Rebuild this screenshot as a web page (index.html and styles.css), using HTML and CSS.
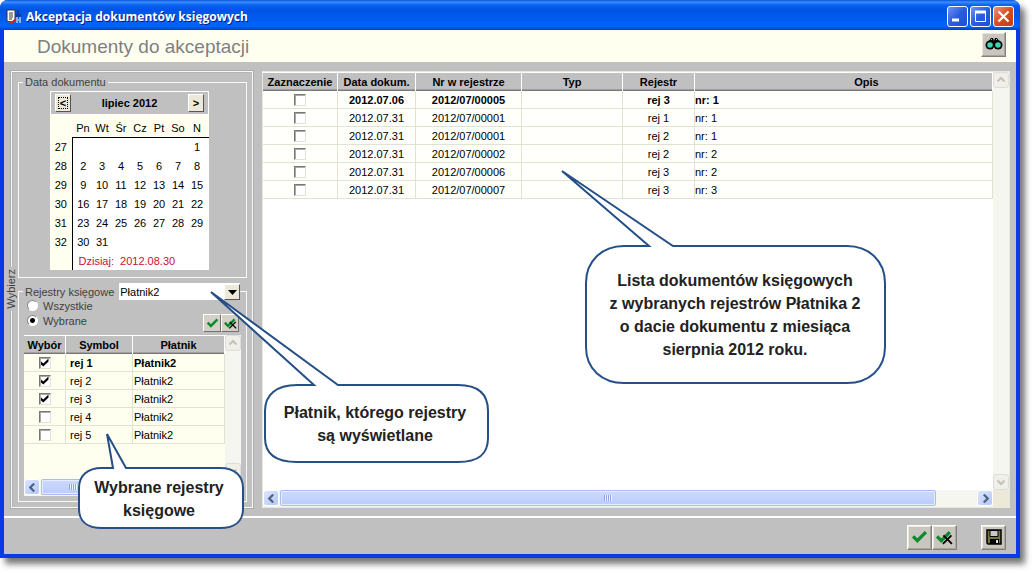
FILE: index.html
```html
<!DOCTYPE html>
<html lang="pl">
<head>
<meta charset="utf-8">
<title>Akceptacja dokumentów księgowych</title>
<link rel="stylesheet" href="styles.css">
</head>
<body>
<svg class="defs" width="0" height="0" aria-hidden="true">
  <symbol id="check" viewBox="0 0 16 16"><path d="M2 7l4 4 8-8" fill="none" stroke="#0b8a2b" stroke-width="3"/></symbol>
  <symbol id="uncheck" viewBox="0 0 16 16"><path d="M1 7l4 4 8-8" fill="none" stroke="#0b8a2b" stroke-width="3"/><path d="M7 6l8 8M14.500 6l-8 8" fill="none" stroke="#000" stroke-width="1.700"/></symbol>
  <symbol id="left" viewBox="0 0 8 8"><path d="M5.500 .5L2 4l3.500 3.500" fill="none" stroke="currentColor" stroke-width="2"/></symbol>
  <symbol id="right" viewBox="0 0 8 8"><path d="M2.500 .5L6 4 2.500 7.500" fill="none" stroke="currentColor" stroke-width="2"/></symbol>
  <symbol id="up" viewBox="0 0 8 8"><path d="M.5 5.500L4 2l3.500 3.500" fill="none" stroke="currentColor" stroke-width="2"/></symbol>
  <symbol id="down" viewBox="0 0 8 8"><path d="M.5 2.500L4 6l3.500-3.500" fill="none" stroke="currentColor" stroke-width="2"/></symbol>
</svg>
<div class="window">
  <div class="titlebar">
    <svg class="app-icon" width="16" height="16" viewBox="0 0 16 16"><path d="M1 1h8v11l-2 2-6-2z" fill="#fff" stroke="#333"/><path d="M3 4h4M3 6h4M3 8h4M3 10h3" stroke="#333"/><path d="M2 12l4 3 5-4-1-2-4 3z" fill="#d22"/><path d="M11 1h2v4h2v3h-5V5h1z" fill="#123a9c"/><path d="M11 8v6M14 8v6M12 11h1" stroke="#b9c6e8" stroke-width="1.500"/></svg>
    <h1 class="title">Akceptacja dokumentów księgowych</h1>
    <button class="win-btn" aria-label="Minimalizuj"><svg width="19" height="19"><path d="M4 13h7" stroke="#fff" stroke-width="3"/></svg></button>
    <button class="win-btn" aria-label="Maksymalizuj"><svg width="19" height="19"><path d="M4.500 5.500h10v9h-10z" fill="none" stroke="#fff"/><path d="M4 5h11" stroke="#fff" stroke-width="3"/></svg></button>
    <button class="win-btn win-close" aria-label="Zamknij"><svg width="19" height="19"><path d="M4.500 4.500l10 10M14.500 4.500l-10 10" stroke="#fff" stroke-width="2.200"/></svg></button>
  </div>
  <div class="header">
    <h2 class="heading">Dokumenty do akceptacji</h2>
    <button class="tool-btn" aria-label="Szukaj"><svg width="18" height="16" viewBox="0 0 18 16"><path d="M3 6l3-4h2l1 3 1-3h2l3 4v3H3z" fill="#000"/><circle cx="5" cy="9" r="4.500"/><circle cx="13" cy="9" r="4.500"/><circle cx="5" cy="9" r="2.800" fill="#3cd6b5"/><circle cx="13" cy="9" r="2.800" fill="#3cd6b5"/><path d="M6 4l1-1M11 3l1 1" stroke="#bbb"/></svg></button>
  </div>
  <div class="content">
    <section class="filter">
      <span class="filter-title">Wybierz</span>
      <fieldset class="group">
        <legend>Data dokumentu</legend>
        <div class="calendar">
          <div class="cal-head"><button class="cal-btn cal-focus">&lt;</button><span>lipiec 2012</span><button class="cal-btn">&gt;</button></div>
          <table class="cal-table">
            <thead><tr><td></td><th>Pn</th><th>Wt</th><th>Śr</th><th>Cz</th><th>Pt</th><th>So</th><th>N</th></tr></thead>
            <tbody>
              <tr><th>27</th><td></td><td></td><td></td><td></td><td></td><td></td><td>1</td></tr>
              <tr><th>28</th><td>2</td><td>3</td><td>4</td><td>5</td><td>6</td><td>7</td><td>8</td></tr>
              <tr><th>29</th><td>9</td><td>10</td><td>11</td><td>12</td><td>13</td><td>14</td><td>15</td></tr>
              <tr><th>30</th><td>16</td><td>17</td><td>18</td><td>19</td><td>20</td><td>21</td><td>22</td></tr>
              <tr><th>31</th><td>23</td><td>24</td><td>25</td><td>26</td><td>27</td><td>28</td><td>29</td></tr>
              <tr><th>32</th><td>30</td><td>31</td><td></td><td></td><td></td><td></td><td></td></tr>
              <tr><th></th><td class="today" colspan="7">Dzisiaj:&nbsp; 2012.08.30</td></tr>
            </tbody>
          </table>
        </div>
      </fieldset>
      <fieldset class="group group-reg">
        <legend class="reg-legend"><label for="payer">Rejestry księgowe</label>
          <span class="combo"><select id="payer"><option>Płatnik2</option></select><span class="combo-arrow"><svg width="9" height="5"><path d="M0 0h9L4.500 5z"/></svg></span></span>
        </legend>
        <div class="reg-options">
          <div class="radios">
            <label><input type="radio" name="scope">Wszystkie</label>
            <label><input type="radio" name="scope" checked>Wybrane</label>
          </div>
          <div class="mini-btns">
            <button class="mini-btn" aria-label="Zaznacz wszystkie"><svg width="13" height="13"><use href="#check"/></svg></button>
            <button class="mini-btn" aria-label="Odznacz wszystkie"><svg width="13" height="13"><use href="#uncheck"/></svg></button>
          </div>
        </div>
        <div class="grid-box reg-grid">
          <div class="grid-body">
            <table class="data">
              <colgroup><col class="w-pick"><col class="w-symbol"><col></colgroup>
              <thead><tr><th>Wybór</th><th>Symbol</th><th>Płatnik</th></tr></thead>
              <tbody>
                <tr class="current"><td class="center"><input type="checkbox" aria-label="rej 1" checked></td><td>rej 1</td><td>Płatnik2</td></tr>
                <tr><td class="center"><input type="checkbox" aria-label="rej 2" checked></td><td>rej 2</td><td>Płatnik2</td></tr>
                <tr><td class="center"><input type="checkbox" aria-label="rej 3" checked></td><td>rej 3</td><td>Płatnik2</td></tr>
                <tr><td class="center"><input type="checkbox" aria-label="rej 4"></td><td>rej 4</td><td>Płatnik2</td></tr>
                <tr><td class="center"><input type="checkbox" aria-label="rej 5"></td><td>rej 5</td><td>Płatnik2</td></tr>
              </tbody>
            </table>
          </div>
          <div class="vscroll"><span class="sb-btn off"><svg width="8" height="8"><use href="#up"/></svg></span><span class="sb-btn off"><svg width="8" height="8"><use href="#down"/></svg></span></div>
          <div class="hscroll"><span class="sb-btn"><svg width="9" height="9"><use href="#left"/></svg></span><span class="track"><span class="thumb short"><i class="grip"></i></span></span><span class="sb-btn"><svg width="9" height="9"><use href="#right"/></svg></span></div>
        </div>
      </fieldset>
    </section>
    <section class="grid-box docs">
      <div class="grid-body">
        <table class="data">
          <colgroup><col class="w-mark"><col class="w-date"><col class="w-no"><col class="w-type"><col class="w-reg"><col></colgroup>
          <thead><tr><th>Zaznaczenie</th><th>Data dokum.</th><th>Nr w rejestrze</th><th>Typ</th><th>Rejestr</th><th class="last">Opis</th></tr></thead>
          <tbody>
            <tr class="current"><td class="center"><input type="checkbox" aria-label="Dokument 1"></td><td class="center">2012.07.06</td><td class="center">2012/07/00005</td><td></td><td class="center">rej 3</td><td>nr: 1</td></tr>
            <tr><td class="center"><input type="checkbox" aria-label="Dokument 2"></td><td class="center">2012.07.31</td><td class="center">2012/07/00001</td><td></td><td class="center">rej 1</td><td>nr: 1</td></tr>
            <tr><td class="center"><input type="checkbox" aria-label="Dokument 3"></td><td class="center">2012.07.31</td><td class="center">2012/07/00001</td><td></td><td class="center">rej 2</td><td>nr: 1</td></tr>
            <tr><td class="center"><input type="checkbox" aria-label="Dokument 4"></td><td class="center">2012.07.31</td><td class="center">2012/07/00002</td><td></td><td class="center">rej 2</td><td>nr: 2</td></tr>
            <tr><td class="center"><input type="checkbox" aria-label="Dokument 5"></td><td class="center">2012.07.31</td><td class="center">2012/07/00006</td><td></td><td class="center">rej 3</td><td>nr: 2</td></tr>
            <tr><td class="center"><input type="checkbox" aria-label="Dokument 6"></td><td class="center">2012.07.31</td><td class="center">2012/07/00007</td><td></td><td class="center">rej 3</td><td>nr: 3</td></tr>
          </tbody>
        </table>
      </div>
      <div class="vscroll"><span class="sb-btn off"><svg width="8" height="8"><use href="#up"/></svg></span><span class="sb-btn off"><svg width="8" height="8"><use href="#down"/></svg></span></div>
      <div class="hscroll"><span class="sb-btn"><svg width="9" height="9"><use href="#left"/></svg></span><span class="track"><span class="thumb"><i class="grip"></i></span></span><span class="sb-btn"><svg width="9" height="9"><use href="#right"/></svg></span></div>
    </section>
  </div>
  <div class="footer">
    <div class="pair">
      <button class="tool-btn" aria-label="Akceptuj"><svg width="17" height="17"><use href="#check"/></svg></button>
      <button class="tool-btn" aria-label="Cofnij akceptację"><svg width="17" height="17"><use href="#uncheck"/></svg></button>
    </div>
    <button class="tool-btn" aria-label="Zapisz"><svg width="16" height="16" viewBox="0 0 16 16"><path d="M1 1h14v14H2l-1-1z" fill="#77753a" stroke="#000" stroke-width="1.500"/><path d="M4 1.500h8v6H4z" fill="#c8c8c8" stroke="#000"/><path d="M4 10h9v5H4z"/><path d="M10 11h2v3h-2z" fill="#ddd"/></svg></button>
  </div>

  <div class="callout callout-payer">
    <svg width="282" height="176"><path d="M3 2L106 95H89C68 95 57 105 57 121V148C57 164 68 172 89 172H250C271 172 280 164 280 148V121C280 105 271 95 250 95H130Z"/></svg>
    <p>Płatnik, którego rejestry<br>są wyświetlane</p>
  </div>
  <div class="callout callout-regs">
    <svg width="168" height="98"><path d="M30 2L36 36H25C10 36 2 44 2 56V77C2 89 10 96 25 96H143C158 96 166 89 166 77V56C166 44 158 36 143 36H49Z"/></svg>
    <p>Wybrane rejestry<br>księgowe</p>
  </div>
  <div class="callout callout-docs">
    <svg width="328" height="216"><path d="M2 2L89 77H64C42 77 26 92 26 114V178C26 200 42 214 64 214H287C309 214 325 200 325 178V114C325 92 309 77 287 77H113Z"/></svg>
    <p>Lista dokumentów księgowych<br>z wybranych rejestrów Płatnika 2<br>o dacie dokumentu z miesiąca<br>sierpnia 2012 roku.</p>
  </div>
</div>
</body>
</html>
```
FILE: styles.css
```css
* { box-sizing: border-box; }
body {
  margin: 0;
  padding: 0 15px 15px 0;
  background: #fff;
  color: #000;
  font: 11px/14px "Liberation Sans", Arial, sans-serif;
}
button, select, input { margin: 0; padding: 0; font: inherit; color: inherit; }
button { display: flex; align-items: center; justify-content: center; flex: none; }
svg { display: block; }
.defs { position: absolute; }

.window {
  position: relative;
  display: flex;
  flex-direction: column;
  min-height: calc(100vh - 15px);
  border: solid #0a3be0;
  border-width: 0 4px 4px;
  border-radius: 8px 8px 0 0;
  background: #c0c0c0;
  box-shadow: 5px 6px 6px #777;
}
.titlebar {
  display: flex;
  align-items: center;
  gap: 2px;
  height: 30px;
  margin: 0 -4px;
  padding: 3px 6px 0;
  border-radius: 8px 8px 0 0;
  background: linear-gradient(#0a4fd0 0, #3a90ff 2px, #0a62f0 5px, #0054e3 10px, #005cf0 20px, #0066ff 26px, #0040c8 30px);
  color: #fff;
}
.title {
  flex: 1;
  margin: 0 0 0 2px;
  font: bold 12px/16px "Open Sans", "Noto Sans", sans-serif;
  text-shadow: 1px 1px #0a1883;
}
.win-btn {
  width: 21px;
  height: 21px;
  border: 1px solid #fff;
  border-radius: 3px;
  background: linear-gradient(135deg, #6b96f5, #2a5be0 50%, #1c4fd8);
}
.win-close { background: linear-gradient(135deg, #f0937a, #dc4a22 50%, #c83a12); }

.header {
  display: flex;
  align-items: center;
  justify-content: space-between;
  height: 32px;
  padding: 0 10px 4px 33px;
  background: #fffff0;
}
.heading { margin: 0; padding-top: 6px; color: #808080; font: 19px/24px "Liberation Sans", Arial, sans-serif; }
.tool-btn {
  width: 25px;
  height: 25px;
  border: 1px solid;
  border-color: #fff #808080 #808080 #fff;
  background: #c8c6be;
  box-shadow: inset -1px -1px #a8a69c, inset 1px 1px #ece9d8;
}

.content { display: flex; flex: 1; gap: 9px; padding: 9px 6px 8px 7px; }
.filter {
  position: relative;
  display: flex;
  flex: none;
  flex-direction: column;
  gap: 5px;
  width: 242px;
  padding: 3px 5px 5px 6px;
  border: 1px solid #f8f8f8;
  box-shadow: 0 0 0 1px #acacac, inset 1px 1px #b4b4b4;
}
.filter-title {
  position: absolute;
  top: 195px;
  left: -7px;
  padding: 2px 0;
  background: #c0c0c0;
  color: #404040;
  line-height: 12px;
  writing-mode: vertical-rl;
  transform: rotate(180deg);
}
.group { min-width: 0; margin: 0; padding: 2px 5px 7px; border: 1px solid #f8f8f8; color: #404040; }
.group legend { padding: 0 2px; margin-left: -1px; }

.calendar { width: 159px; margin-left: 26px; background: #fff; color: #000; }
.cal-head {
  display: flex;
  align-items: center;
  justify-content: space-between;
  height: 24px;
  padding: 0 4px;
  border: 1px solid #fff;
  background: #c0c0c0;
  font-weight: bold;
}
.cal-btn {
  width: 16px;
  height: 18px;
  border: 1px solid;
  border-color: #fff #555 #555 #fff;
  background: #ece9d8;
}
.cal-focus { outline: 1px dotted #000; outline-offset: -4px; }
.cal-table { width: 100%; border-collapse: collapse; table-layout: fixed; }
.cal-table th, .cal-table td { width: 19px; height: 19px; padding: 0 0 0 3px; font-weight: normal; text-align: center; white-space: nowrap; }
.cal-table td:nth-child(8), .cal-table th:nth-child(8) { width: 23px; padding-right: 4px; }
.cal-table thead { background: #fffff0; }
.cal-table thead th { height: 22px; padding-top: 4px; border-bottom: 1px solid #000; }
.cal-table thead td, .cal-table tbody th { width: 22px; padding: 0; background: #fffff0; }
.cal-table tbody th { border-right: 1px solid #000; }
.cal-table .today { padding-left: 6px; color: #c8102e; text-align: left; }

.group-reg { flex: 1; display: flex; flex-direction: column; padding: 0 5px 5px; }
.group .reg-legend { display: flex; align-items: center; gap: 5px; width: 217px; padding-right: 0; }
.combo { position: relative; flex: 1; height: 17px; }
.combo select { display: block; width: 100%; height: 17px; padding-left: 1px; border: 0; border-radius: 0; background: #fff; color: #000; appearance: none; }
.combo-arrow {
  position: absolute;
  top: 1px;
  right: 0;
  display: flex;
  align-items: center;
  justify-content: center;
  width: 16px;
  height: 16px;
  border: 1px solid;
  border-color: #fff #555 #555 #fff;
  background: #ece9d8;
  pointer-events: none;
}
.reg-options { display: flex; justify-content: space-between; align-items: flex-end; margin-top: -2px; padding-bottom: 3px; }
.radios label { display: flex; align-items: center; gap: 5px; height: 15px; padding-left: 3px; }
.radios { padding-bottom: 4px; }
.radios input { width: 11px; height: 11px; border: 1px solid #888; border-right-color: #fff; border-bottom-color: #fff; border-radius: 50%; background: #fff; appearance: none; }
.radios input:checked { background: radial-gradient(#000 2px, #fff 3px); }
.mini-btns { display: flex; margin-right: 2px; }
.mini-btn { width: 18px; height: 18px; border: 1px solid; border-color: #fff #707070 #707070 #fff; background: #d4d0c8; }

.grid-box { display: grid; grid-template-columns: minmax(0, 1fr) 16px; grid-template-rows: 1fr 17px; color: #000; background: #ece9d8; }
.reg-grid { flex: 1; }
.docs { flex: 1; min-width: 0; border: 1px solid #e8e8e0; }
.grid-body { background: #fff; }
.reg-grid .grid-body { background: #fffff0; }
.data { width: 100%; border-collapse: separate; border-spacing: 0; table-layout: fixed; }
.data th {
  height: 19px;
  padding: 0;
  border: 1px solid #fff;
  border-width: 1px 1px 0 0;
  background: #c0c0c0;
  box-shadow: inset 0 -1px #777, inset 0 -2px #a0a0a0;
  white-space: nowrap;
}
.docs .last { padding-left: 46px; }
.data td { height: 18px; padding: 0 1px; border: solid #e2e2d2; border-width: 0 1px 1px 0; white-space: nowrap; }
.docs td { background: #fffffc; }
.docs td:last-child { padding-left: 0; }
.reg-grid td:nth-child(2) { padding-left: 4px; }
.data .center { text-align: center; }
.current { font-weight: bold; }
.w-pick { width: 42px; }
.w-symbol { width: 67px; }
.w-mark { width: 75px; }
.w-date { width: 78px; }
.w-no { width: 106px; }
.w-type { width: 101px; }
.w-reg { width: 72px; }
.data input {
  display: block;
  width: 12px;
  height: 12px;
  margin: 0 auto;
  border: 1px solid;
  border-color: #777 #e4e2d8 #e4e2d8 #777;
  background: #fff;
  box-shadow: inset 1px 1px #aaa;
  appearance: none;
}
.data input:checked::before {
  content: "";
  display: block;
  width: 8px;
  height: 8px;
  margin: 1px;
  background: #000;
  clip-path: polygon(0 30%, 35% 62%, 100% 0, 100% 38%, 35% 100%, 0 68%);
}
.vscroll { display: flex; flex-direction: column; justify-content: space-between; align-items: center; background: #f6f6f0; }
.hscroll { display: flex; background: #f6f6f0; }
.sb-btn {
  display: flex;
  flex: none;
  align-items: center;
  justify-content: center;
  width: 16px;
  height: 16px;
  border: 1px solid #fff;
  border-radius: 3px;
  background: linear-gradient(135deg, #dbe5ff, #b4c8f6);
  color: #4d6185;
}
.sb-btn.off { background: #f0efe8; border-color: #ddd; color: #c4c2b8; }
.track { display: flex; flex: 1; }
.thumb {
  display: flex;
  align-items: center;
  justify-content: center;
  width: 94%;
  height: 16px;
  margin-left: 1px;
  border: 1px solid #a8bdf0;
  border-radius: 2px;
  background: linear-gradient(#cbd9ff, #bccdfb);
  box-shadow: inset 0 0 0 1px #e4ecff;
}
.thumb.short { width: 38%; }
.grip { width: 8px; height: 6px; background: repeating-linear-gradient(90deg, #8da6e0 0 1px, #eef3ff 1px 2px); }

.footer { display: flex; align-items: center; justify-content: flex-end; gap: 24px; height: 38px; padding: 4px 10px 2px 0; border-top: 2px solid #fff; }
.pair { display: flex; }

.callout { position: absolute; pointer-events: none; }
.callout path { fill: #fff; stroke: #254f86; stroke-width: 2; }
.callout p {
  position: absolute;
  right: 3px;
  margin: 0;
  color: #222;
  font: bold 16px/23px "Liberation Sans Narrow", "Liberation Sans", Arial, sans-serif;
  text-align: center;
  white-space: nowrap;
}
.callout-payer { top: 290px; left: 204px; }
.callout-payer p { top: 111px; width: 224px; }
.callout-regs { top: 432px; left: 73px; }
.callout-regs p { top: 44px; width: 166px; }
.callout-docs { top: 169px; left: 556px; }
.callout-docs p { top: 100px; width: 300px; }
```
